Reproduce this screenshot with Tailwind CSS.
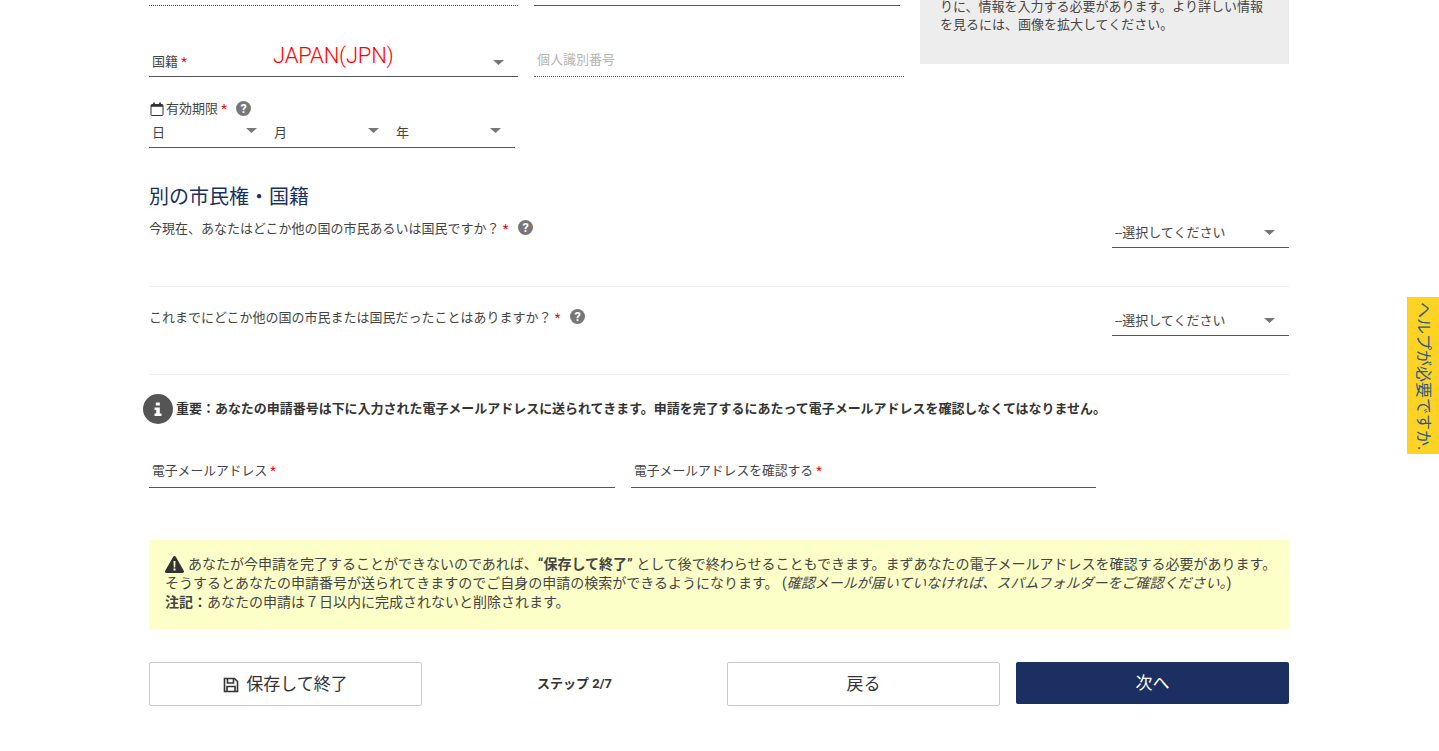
<!DOCTYPE html>
<html lang="ja"><head><meta charset="utf-8"><title>申請</title>
<script src="https://cdn.jsdelivr.net/npm/@tailwindcss/browser@4"></script></head>
<body class="bg-white overflow-hidden h-[751px] text-[#444] font-['Roboto','Noto_Sans_CJK_JP',sans-serif]">
<div class="relative h-[751px]">
<div class="ml-[149px] w-[1140px]">

<div class="flex h-[180px]">
  <div class="w-[771px] shrink-0">
    <div class="flex h-[6px]">
      <div class="w-[369px] border-b border-dotted border-[#555]"></div>
      <div class="w-[366px] ml-4 border-b border-[#555]"></div>
    </div>
    <div class="flex h-[71px]">
      <div class="w-[369px] border-b border-[#555] flex items-end justify-between pb-[5px] pl-[3px] pr-[14px] text-[13px] leading-[18px]">
        <span>国籍 <span class="text-[#e00]">*</span></span>
        <svg class="w-[11px] h-[5px] mb-[6px]" viewBox="0 0 11 5"><path d="M0 0h11L5.500 5z" fill="#777"/></svg>
      </div>
      <div class="w-[370px] ml-4 border-b border-dotted border-[#555] flex items-end pb-[7px] pl-[3px] text-[13px] leading-[18px] text-[#b5b5b5]">個人識別番号</div>
    </div>
    <div class="flex items-center h-[18px] mt-[23px] text-[13px] leading-[18px]">
      <svg class="w-[14px] h-[14px] ml-[1px] mr-[2px]" viewBox="0 0 14 14" fill="none" stroke="#333"><rect x="1" y="2.500" width="12" height="11" rx="1" stroke-width="1"/><path d="M1 3.800h12" stroke-width="2"/><path d="M4 .5v3M10 .5v3" stroke-width="1.800"/></svg>
      <span>有効期限 <span class="text-[#e00]">*</span></span>
      <svg class="w-[15px] h-[15px] ml-[9px] mb-[1px]" viewBox="0 0 15 15"><circle cx="7.500" cy="7.500" r="7.500" fill="#777"/><text x="7.500" y="12" text-anchor="middle" font-size="12.500" font-weight="700" fill="#fff" font-family="Roboto">?</text></svg>
    </div>
    <div class="flex w-[366px] h-[30px] border-b border-[#555] text-[13px] leading-[18px]">
      <div class="w-[122px] flex justify-between pl-[3px] pr-[14px] pt-[6px]"><span>日</span><svg class="w-[11px] h-[5px] mt-[4px]" viewBox="0 0 11 5"><path d="M0 0h11L5.500 5z" fill="#777"/></svg></div>
      <div class="w-[122px] flex justify-between pl-[3px] pr-[14px] pt-[6px]"><span>月</span><svg class="w-[11px] h-[5px] mt-[4px]" viewBox="0 0 11 5"><path d="M0 0h11L5.500 5z" fill="#777"/></svg></div>
      <div class="w-[122px] flex justify-between pl-[3px] pr-[14px] pt-[6px]"><span>年</span><svg class="w-[11px] h-[5px] mt-[4px]" viewBox="0 0 11 5"><path d="M0 0h11L5.500 5z" fill="#777"/></svg></div>
    </div>
  </div>
  <div class="w-[369px] h-[66px] bg-[#ededed] px-5 text-[13px] leading-[18px] -mt-[2px] text-[#444]">
    <p>りに、情報を入力する必要があります。より詳しい情報を見るには、画像を拡大してください。</p>
  </div>
</div>

<h2 class="text-[20px] leading-[26px] font-normal text-[#1b3060] h-[33px] pt-[4px]">別の市民権・国籍</h2>

<div class="flex justify-between h-[74px] border-b border-[#eee]">
  <div class="flex items-start text-[13px] leading-[18px] mt-[7px]">
    <span>今現在、あなたはどこか他の国の市民あるいは国民ですか？ <span class="text-[#e00]">*</span></span>
    <svg class="w-[15px] h-[15px] ml-[10px]" viewBox="0 0 15 15"><circle cx="7.500" cy="7.500" r="7.500" fill="#777"/><text x="7.500" y="12" text-anchor="middle" font-size="12.500" font-weight="700" fill="#fff" font-family="Roboto">?</text></svg>
  </div>
  <div class="w-[177px] h-[35px] border-b border-[#555] flex justify-between items-end pb-[5px] pl-[3px] pr-[14px] text-[13px] leading-[18px]"><span>--選択してください</span><svg class="w-[11px] h-[5px] mb-[7px]" viewBox="0 0 11 5"><path d="M0 0h11L5.500 5z" fill="#777"/></svg></div>
</div>
<div class="flex justify-between h-[88px] border-b border-[#eee]">
  <div class="flex items-start text-[13px] leading-[18px] mt-[22px]">
    <span>これまでにどこか他の国の市民または国民だったことはありますか？ <span class="text-[#e00]">*</span></span>
    <svg class="w-[15px] h-[15px] ml-[10px]" viewBox="0 0 15 15"><circle cx="7.500" cy="7.500" r="7.500" fill="#777"/><text x="7.500" y="12" text-anchor="middle" font-size="12.500" font-weight="700" fill="#fff" font-family="Roboto">?</text></svg>
  </div>
  <div class="w-[177px] h-[49px] border-b border-[#555] flex justify-between items-end pb-[5px] pl-[3px] pr-[14px] text-[13px] leading-[18px]"><span>--選択してください</span><svg class="w-[11px] h-[5px] mb-[7px]" viewBox="0 0 11 5"><path d="M0 0h11L5.500 5z" fill="#777"/></svg></div>
</div>

<div class="flex items-center h-[30px] mt-[19px] -ml-[6px] text-[12.970px] font-bold text-[#333]">
  <svg class="w-[30px] h-[30px] mr-[3px] shrink-0" viewBox="0 0 30 30"><circle cx="15" cy="15" r="15" fill="#555"/><path d="M12.800 8.500h4v3h-4zM11.500 13.500h5.300v6h1.700V22h-7v-2.500h1.700v-3.500h-1.700z" fill="#fff"/></svg>
  <span>重要：あなたの申請番号は下に入力された電子メールアドレスに送られてきます。申請を完了するにあたって電子メールアドレスを確認しなくてはなりません。</span>
</div>

<div class="flex gap-4 mt-[25px] h-[39px] w-[947px]">
  <div class="w-[466px] border-b border-[#555] pl-[3px] pt-[13px] text-[12.800px] leading-[18px]">電子メールアドレス <span class="text-[#e00]">*</span></div>
  <div class="w-[465px] border-b border-[#555] pl-[3px] pt-[13px] text-[12.800px] leading-[18px]">電子メールアドレスを確認する <span class="text-[#e00]">*</span></div>
</div>

<div class="mt-[52px] h-[89px] bg-[#fdffc8] pl-4 pr-2 pt-[15px] text-[14px] leading-[19px] text-[#444]">
  <div class="flex items-center">
    <svg class="w-[19px] h-[17px] mr-[4px] shrink-0" viewBox="0 0 19 17"><path d="M9.500 0a1.500 1.500 0 0 1 1.300.8l8 14a1.500 1.500 0 0 1-1.300 2.200h-16a1.500 1.500 0 0 1-1.300-2.200l8-14A1.500 1.500 0 0 1 9.500 0z" fill="#333"/><path d="M8.500 5h2l-.3 6.500h-1.400zM8.500 12.500h2v2h-2z" fill="#fdffc8"/></svg>
    <span class="whitespace-nowrap">あなたが今申請を完了することができないのであれば、<b>“保存して終了”</b> として後で終わらせることもできます。まずあなたの電子メールアドレスを確認する必要があります。</span>
  </div>
  <p>そうするとあなたの申請番号が送られてきますのでご自身の申請の検索ができるようになります。 (<i>確認メールが届いていなければ、スパムフォルダーをご確認ください。</i>)</p>
  <p><b>注記：</b>あなたの申請は７日以内に完成されないと削除されます。</p>
</div>

<div class="flex mt-[33px] items-start">
  <button class="w-[273px] h-[44px] pt-[1px] border border-[#ccc] rounded-[2px] flex items-center justify-center text-[17px] text-[#333]">
    <svg class="w-[16px] h-[16px] mr-[8px]" viewBox="0 0 16 16" fill="none" stroke="#333" stroke-width="1.600"><path d="M1.500 1.500h10l3 3v10h-13z"/><path d="M4.500 2v4h6V2M4 14.500V9.500h8v5"/></svg>
    <span class="-ml-[1px]">保存して終了</span>
  </button>
  <div class="w-[305px] h-[44px] flex items-center justify-center text-[13px] font-bold text-[#333]">ステップ 2/7</div>
  <button class="w-[273px] h-[44px] pt-[1px] border border-[#ccc] rounded-[2px] text-[17px] text-[#333]">戻る</button>
  <button class="w-[273px] h-[42px] pt-[1px] ml-4 bg-[#1b3060] rounded-[2px] text-[17px] text-white">次へ</button>
</div>

</div>

<span class="absolute left-[273px] top-[42px] text-[22px] leading-[28px] tracking-[-0.200px] font-light text-[#f00] font-['Roboto',sans-serif]">JAPAN(JPN)</span>
<div class="absolute right-0 top-[297px] w-[32px] h-[157px] bg-[#ffd324] flex items-center justify-center">
  <span class="shrink-0 rotate-90 whitespace-nowrap text-[#2a5a8a] text-[16px] leading-[20px]">ヘルプが必要ですか.</span>
</div>
</div>
</body></html>
